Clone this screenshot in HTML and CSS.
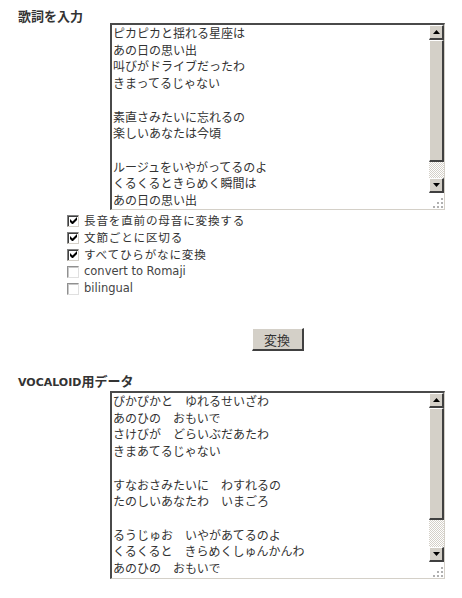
FILE: index.html
```html
<!DOCTYPE html>
<html lang="ja">
<head>
<meta charset="utf-8">
<title>VOCALOID</title>
<link rel="stylesheet" href="styles.css">
</head>
<body>
<div class="page">
  <div class="heading">歌詞を入力</div>
  <div class="field">
    <div class="textbox tb1">
      <div class="text">ピカピカと揺れる星座は
あの日の思い出
叫びがドライブだったわ
きまってるじゃない

素直さみたいに忘れるの
楽しいあなたは今頃

ルージュをいやがってるのよ
くるくるときらめく瞬間は
あの日の思い出</div>
      <div class="sb">
        <div class="sbtn"><svg width="7" height="4" viewBox="0 0 7 4"><path d="M3.5 0 L7 4 L0 4 Z" fill="#000"/></svg></div>
        <div class="thumb t1"></div>
        <div class="track"></div>
        <div class="sbtn"><svg width="7" height="4" viewBox="0 0 7 4"><path d="M0 0 L7 0 L3.5 4 Z" fill="#000"/></svg></div>
        <div class="grip"><svg width="11" height="11" viewBox="0 0 11 11"><g fill="#b0b0b0"><rect x="9" y="1" width="2" height="2"/><rect x="5" y="5" width="2" height="2"/><rect x="9" y="5" width="2" height="2"/><rect x="1" y="9" width="2" height="2"/><rect x="5" y="9" width="2" height="2"/><rect x="9" y="9" width="2" height="2"/></g></svg></div>
      </div>
    </div>
  </div>

  <div class="options">
    <label class="opt"><span class="box on"><svg width="7" height="7" viewBox="0 0 7 7"><path d="M0 2 L0 5 L2 7 L3 7 L7 3 L7 0 L2.5 4.5 Z" fill="#000"/></svg></span><span class="jp">長音を直前の母音に変換する</span></label>
    <label class="opt"><span class="box on"><svg width="7" height="7" viewBox="0 0 7 7"><path d="M0 2 L0 5 L2 7 L3 7 L7 3 L7 0 L2.5 4.5 Z" fill="#000"/></svg></span><span class="jp">文節ごとに区切る</span></label>
    <label class="opt"><span class="box on"><svg width="7" height="7" viewBox="0 0 7 7"><path d="M0 2 L0 5 L2 7 L3 7 L7 3 L7 0 L2.5 4.5 Z" fill="#000"/></svg></span><span class="jp">すべてひらがなに変換</span></label>
    <label class="opt"><span class="box off"></span><span class="en">convert to Romaji</span></label>
    <label class="opt"><span class="box off"></span><span class="en">bilingual</span></label>
  </div>

  <div class="field btnrow">
    <button class="convert" type="button">変換</button>
  </div>

  <div class="heading h2"><span class="lat">VOCALOID</span>用データ</div>
  <div class="field">
    <div class="textbox tb2">
      <div class="text">ぴかぴかと　ゆれるせいざわ
あのひの　おもいで
さけびが　どらいぶだあたわ
きまあてるじゃない

すなおさみたいに　わすれるの
たのしいあなたわ　いまごろ

るうじゅお　いやがあてるのよ
くるくると　きらめくしゅんかんわ
あのひの　おもいで</div>
      <div class="sb">
        <div class="sbtn"><svg width="7" height="4" viewBox="0 0 7 4"><path d="M3.5 0 L7 4 L0 4 Z" fill="#000"/></svg></div>
        <div class="thumb t2"></div>
        <div class="track"></div>
        <div class="sbtn"><svg width="7" height="4" viewBox="0 0 7 4"><path d="M0 0 L7 0 L3.5 4 Z" fill="#000"/></svg></div>
        <div class="grip"><svg width="11" height="11" viewBox="0 0 11 11"><g fill="#b0b0b0"><rect x="9" y="1" width="2" height="2"/><rect x="5" y="5" width="2" height="2"/><rect x="9" y="5" width="2" height="2"/><rect x="1" y="9" width="2" height="2"/><rect x="5" y="9" width="2" height="2"/><rect x="9" y="9" width="2" height="2"/></g></svg></div>
      </div>
    </div>
  </div>
</div>
</body>
</html>
```

FILE: styles.css
```css
html, body {
  margin: 0;
  padding: 0;
  background: #fff;
}

.page {
  padding: 8px 0 0 18px;
  font-family: "Noto Sans CJK JP", sans-serif;
  color: #333;
}

.heading {
  font-weight: bold;
  font-size: 13px;
  line-height: 15px;
  color: #333;
}

.heading.h2 {
  margin-top: 22px;
}

.heading .lat {
  font-family: "DejaVu Sans", sans-serif;
  font-size: 11px;
}

.field {
  margin-left: 92px;
  width: 335px;
}

.textbox {
  display: flex;
  box-sizing: border-box;
  width: 335px;
  background: #fff;
  border-style: solid;
  border-width: 2px 1px 1px 2px;
  border-color: #4a4a4a #d4d0c8 #d4d0c8 #4a4a4a;
}

.tb1 {
  height: 187px;
}

.tb2 {
  height: 188px;
  margin-top: 1px;
}

.text {
  flex: 1;
  overflow: hidden;
  white-space: pre;
  font-size: 12px;
  line-height: 16.7px;
  color: #333;
  padding-left: 1px;
}

.sb {
  width: 15px;
  display: flex;
  flex-direction: column;
}

.sbtn {
  box-sizing: border-box;
  height: 15px;
  display: flex;
  align-items: center;
  justify-content: center;
  background: #d4d0c8;
  border-style: solid;
  border-width: 1px 2px 2px 1px;
  border-color: #fff #404040 #404040 #fff;
}

.thumb {
  box-sizing: border-box;
  background: #d4d0c8;
  border-style: solid;
  border-width: 1px 2px 2px 1px;
  border-color: #fff #404040 #404040 #fff;
}

.t1 {
  height: 122px;
}

.t2 {
  height: 112px;
}

.track {
  flex: 1;
  background-color: #fff;
  background-image:
    linear-gradient(45deg, #d4d0c8 25%, transparent 25%, transparent 75%, #d4d0c8 75%),
    linear-gradient(45deg, #d4d0c8 25%, transparent 25%, transparent 75%, #d4d0c8 75%);
  background-size: 2px 2px;
  background-position: 0 0, 1px 1px;
}

.grip {
  height: 15px;
  display: flex;
  align-items: flex-end;
  justify-content: flex-end;
  background: #fff;
  padding: 0 1px 1px 0;
}

.options {
  margin-left: 49px;
  margin-top: 2px;
  display: flex;
  flex-direction: column;
}

.opt {
  display: flex;
  align-items: center;
  height: 17px;
  line-height: 17px;
  gap: 5px;
}

.box {
  box-sizing: border-box;
  width: 12px;
  height: 12px;
  display: flex;
  align-items: center;
  justify-content: center;
  background: #fff;
  border-style: solid;
  border-width: 1px;
}

.box.on {
  border-color: #808080 #d4d0c8 #d4d0c8 #808080;
  box-shadow: inset 1px 1px 0 #404040;
}

.box.off {
  border-color: #909090 #e0e0e0 #e0e0e0 #909090;
  box-shadow: inset 1px 1px 0 #c8c8c8;
}

.jp {
  font-size: 11.6px;
  letter-spacing: 0.8px;
  line-height: 17px;
  color: #333;
}

.en {
  font-family: "DejaVu Sans", sans-serif;
  font-size: 11.5px;
  line-height: 17px;
  color: #444;
}

.btnrow {
  display: flex;
  justify-content: center;
  margin-top: 31px;
}

.convert {
  box-sizing: border-box;
  width: 52px;
  height: 23px;
  padding: 0;
  background: #d4d0c8;
  border-style: solid;
  border-width: 1px 2px 2px 1px;
  border-color: #fff #404040 #404040 #fff;
  font-family: "Noto Sans CJK JP", sans-serif;
  font-size: 13px;
  color: #333;
}
```
